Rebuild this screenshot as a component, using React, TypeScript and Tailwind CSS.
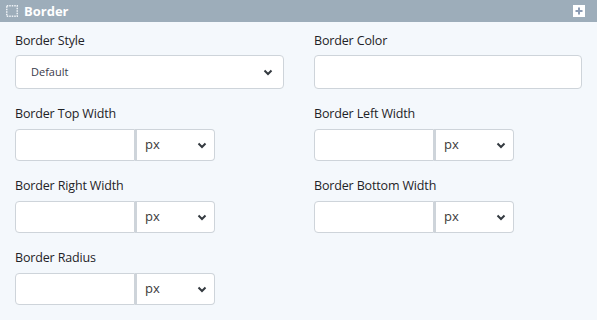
import React from 'react';

const font = { fontFamily: '"Open Sans", "Noto Sans", sans-serif' };

function Chevron() {
    return (
        <svg width="10" height="7" viewBox="0 0 10 7" className="pointer-events-none">
            <path d="M1.5 1.5 L5 5 L8.5 1.5" fill="none" stroke="#343a40" strokeWidth="2" />
        </svg>
    );
}

function Label({ children, gap = 'mb-[6px]' }: { children: React.ReactNode; gap?: string }) {
    return (
        <div className={`text-[12.5px] leading-[18px] font-medium text-[#1f2327] tracking-[-0.15px] ${gap}`}>
            {children}
        </div>
    );
}

function UnitField({ label }: { label: string }) {
    return (
        <div>
            <Label>{label}</Label>
            <div className="flex w-[200px] h-[32px]">
                <div className="w-[120px] h-full bg-white border border-[#ced4da] rounded-l-[4px]" />
                <div className="flex-1 h-full bg-white border border-l-[2px] border-[#ced4da] rounded-r-[4px] flex items-center justify-between pl-[8px] pr-[7px]">
                    <span className="text-[13px] text-[#3a3a3a]">px</span>
                    <Chevron />
                </div>
            </div>
        </div>
    );
}

export default function App() {
    return (
        <div className="w-[597px] h-[320px] bg-[#f4f8fc] overflow-hidden" style={font}>
            {/* Header */}
            <div className="h-[22px] bg-[#9dadba] flex items-center justify-between pl-[6px] pr-[12px]">
                <div className="flex items-center gap-[6px]">
                    <svg width="12" height="12" viewBox="0 0 12 12">
                        <rect x="0.75" y="0.75" width="10.5" height="10.5" fill="none" stroke="#eef2f6" strokeWidth="1.5" strokeDasharray="1.5 1" />
                    </svg>
                    <span className="text-[13px] font-bold text-white leading-none">Border</span>
                </div>
                <svg width="12" height="12" viewBox="0 0 12 12">
                    <rect x="0" y="0" width="12" height="12" fill="#ffffff" />
                    <path d="M6 2.5 V9.5 M2.5 6 H9.5" stroke="#8c9cb4" strokeWidth="2" />
                </svg>
            </div>

            {/* Body */}
            <div className="grid grid-cols-[269px_268px] gap-x-[30px] gap-y-[16px] pl-[15px] pt-[10px]">
                <div>
                    <Label gap="mb-[5px]">Border Style</Label>
                    <div className="h-[34px] bg-white border border-[#ced4da] rounded-[4px] flex items-center justify-between pl-[15px] pr-[10px]">
                        <span className="text-[11px] text-[#3a3a4a]">Default</span>
                        <Chevron />
                    </div>
                </div>
                <div>
                    <Label gap="mb-[5px]">Border Color</Label>
                    <div className="h-[34px] bg-white border border-[#ced4da] rounded-[4px]" />
                </div>
                <UnitField label="Border Top Width" />
                <UnitField label="Border Left Width" />
                <UnitField label="Border Right Width" />
                <UnitField label="Border Bottom Width" />
                <UnitField label="Border Radius" />
            </div>
        </div>
    );
}
